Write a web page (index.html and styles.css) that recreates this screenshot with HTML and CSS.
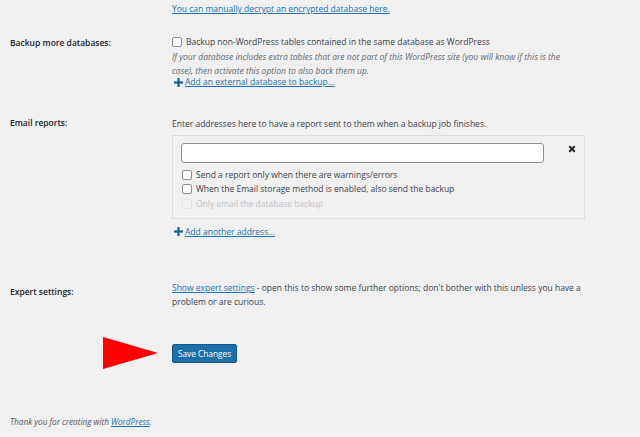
FILE: index.html
```html
<!DOCTYPE html>
<html lang="en">
<head>
<meta charset="utf-8">
<title>UpdraftPlus settings</title>
<link rel="stylesheet" href="styles.css">
</head>
<body>
<div class="page">
  <div class="row row-top">
    <div class="label"></div>
    <div class="field"><a class="link" href="#">You can manually decrypt an encrypted database here.</a></div>
  </div>

  <div class="row row-backup">
    <div class="label">Backup more databases:</div>
    <div class="field">
      <label class="check"><input type="checkbox" class="cb">Backup non-WordPress tables contained in the same database as WordPress</label>
      <p class="desc">If your database includes extra tables that are not part of this WordPress site (you will know if this is the case), then activate this option to also back them up.</p>
      <a class="add" href="#"><svg class="plus" viewBox="0 0 10 10" width="9" height="9"><rect x="3.8" y="0" width="2.4" height="10"/><rect x="0" y="3.8" width="10" height="2.4"/></svg><span>Add an external database to backup...</span></a>
    </div>
  </div>

  <div class="row row-email">
    <div class="label">Email reports:</div>
    <div class="field">
      <div class="line">Enter addresses here to have a report sent to them when a backup job finishes.</div>
      <div class="emailbox">
        <div class="inputline">
          <input type="text" class="email">
          <svg class="remove" viewBox="0 0 10 10" width="8" height="8"><path d="M1.5 1.5 L8.5 8.5 M8.5 1.5 L1.5 8.5" stroke="#1d2327" stroke-width="2.4" stroke-linecap="butt"/></svg>
        </div>
        <div class="checks">
          <label class="check"><input type="checkbox" class="cb">Send a report only when there are warnings/errors</label>
          <label class="check"><input type="checkbox" class="cb">When the Email storage method is enabled, also send the backup</label>
          <label class="check disabled"><input type="checkbox" class="cb" disabled>Only email the database backup</label>
        </div>
      </div>
      <a class="add add-addr" href="#"><svg class="plus" viewBox="0 0 10 10" width="9" height="9"><rect x="3.8" y="0" width="2.4" height="10"/><rect x="0" y="3.8" width="10" height="2.4"/></svg><span>Add another address...</span></a>
    </div>
  </div>

  <div class="row row-expert">
    <div class="label">Expert settings:</div>
    <div class="field expert-text"><a class="link" href="#">Show expert settings</a> - open this to show some further options; don't bother with this unless you have a problem or are curious.</div>
  </div>

  <div class="row row-submit">
    <div class="label"></div>
    <div class="field submit-field">
      <div class="arrow"></div>
      <button class="primary" type="button">Save Changes</button>
    </div>
  </div>
</div>
<footer class="footer">
  <p class="thanks">Thank you for creating with <a href="#">WordPress</a>.</p>
</footer>
</body>
</html>
```

FILE: styles.css
```css
html, body {
  margin: 0;
  padding: 0;
}
body {
  width: 640px;
  height: 437px;
  background: #f0f0f1;
  color: #3c434a;
  font-family: "Open Sans", "Noto Sans", sans-serif;
  font-size: 8.5px;
  line-height: 14px;
  overflow: hidden;
  display: flex;
  flex-direction: column;
}
a {
  color: #2271b1;
  text-decoration: underline;
}
.page {
  padding: 2.3px 0 0 10px;
}
.row {
  display: grid;
  grid-template-columns: 162px 412px;
}
.label {
  font-weight: 600;
  color: #1d2327;
}
.row-backup {
  margin-top: 19px;
}
.row-backup .label {
  padding-top: 1px;
}
.check {
  display: flex;
  align-items: center;
  height: 14px;
  white-space: nowrap;
}
.cb {
  -webkit-appearance: none;
  appearance: none;
  width: 10px;
  height: 10px;
  margin: 0 4px 0 0;
  border: 1px solid #8c8f94;
  border-radius: 2px;
  background: #fff;
  box-sizing: border-box;
  flex: none;
}
.desc {
  max-width: 400px;
  margin: 1px 0 0;
  font-style: italic;
  color: #646970;
}
.add {
  display: flex;
  align-items: center;
  line-height: 12px;
  margin-top: -2px;
}
.add .plus {
  fill: #135e96;
  margin: 0 2px 0 2px;
}
.row-email {
  margin-top: 29px;
}
.row-email .label {
  margin-top: -1px;
}
.emailbox {
  width: 413px;
  box-sizing: border-box;
  margin-top: 4px;
  border: 1px solid #dcdcde;
  background: #f0f0f1;
  padding: 7px 8px 7px 8px;
}
.inputline {
  display: flex;
  align-items: flex-start;
}
.email {
  width: 364px;
  height: 20px;
  box-sizing: border-box;
  border: 1px solid #8c8f94;
  border-radius: 3px;
  background: #fff;
  margin: 0;
  padding: 0 6px;
}
.remove {
  margin: 2px 0 0 24px;
}
.checks {
  margin-top: 4px;
}
.checks .check {
  height: 14.5px;
  padding-left: 1px;
}
.check.disabled {
  color: #c3c4c7;
}
.check.disabled .cb {
  border-color: #e4e4e6;
  background: #f3f3f4;
}
.add-addr {
  margin-top: 6px;
  line-height: 14px;
}
.row-expert {
  margin-top: 42.6px;
}
.row-expert .label {
  padding-top: 3.4px;
}
.expert-text {
  line-height: 13.4px;
}
.row-submit {
  margin-top: 35.6px;
}
.submit-field {
  position: relative;
}
.arrow {
  position: absolute;
  left: -69px;
  top: -7px;
  width: 0;
  height: 0;
  border-top: 16.5px solid transparent;
  border-bottom: 16.5px solid transparent;
  border-left: 55px solid #ff0000;
}
.primary {
  width: 65px;
  height: 19px;
  margin: 0;
  padding: 0;
  background: #1d6fa9;
  border: 1px solid #14598c;
  border-radius: 2px;
  color: #fff;
  font-family: "Open Sans", "Noto Sans", sans-serif;
  font-size: 8.3px;
  line-height: 17px;
}
.footer {
  margin-top: auto;
  padding: 0 0 0 10px;
  border-bottom: 4px solid #f5f5f6;
}
.thanks {
  margin: 0 0 3.7px;
  font-size: 8.2px;
  font-style: italic;
  color: #50575e;
}
```
